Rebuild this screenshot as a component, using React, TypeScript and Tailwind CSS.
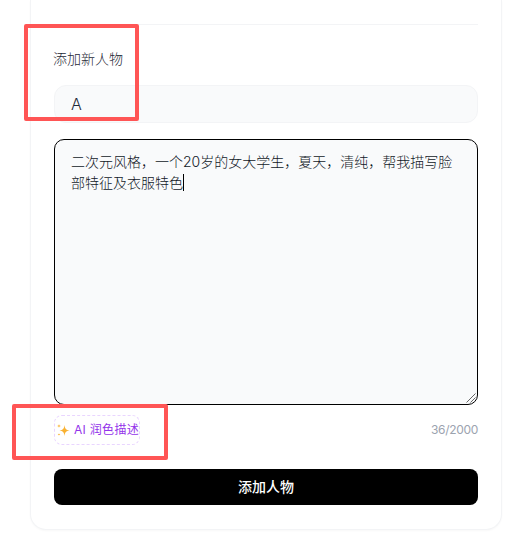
const FONT = "font-['Inter','Noto_Sans_CJK_SC',sans-serif]";

function Sparkle() {
  return (
    <svg width="14" height="14" viewBox="0 0 14 14" className="shrink-0">
      <path d="M8.5 2 C9 6 10 7 13.5 7.5 C10 8 9 9 8.5 13 C8 9 7 8 3.5 7.5 C7 7 8 6 8.5 2Z" fill="#f9b233" />
      <path d="M3 1 C3.2 2.4 3.6 2.8 5 3 C3.6 3.2 3.2 3.6 3 5 C2.8 3.6 2.4 3.2 1 3 C2.4 2.8 2.8 2.4 3 1Z" fill="#f9b233" />
      <path d="M3 10 C3.1 11 3.4 11.4 4.4 11.5 C3.4 11.6 3.1 12 3 13 C2.9 12 2.6 11.6 1.6 11.5 C2.6 11.4 2.9 11 3 10Z" fill="#f9b233" />
    </svg>
  );
}

function ResizeHandle() {
  return (
    <svg width="10" height="10" viewBox="0 0 10 10" className="pointer-events-none absolute bottom-[2px] right-[2px]">
      <path d="M9.5 0.5 L0.5 9.5 M9.5 4.5 L4.5 9.5" stroke="#666666" strokeWidth="1" fill="none" />
    </svg>
  );
}

export default function App() {
  return (
    <div className={`relative h-[540px] w-[525px] overflow-hidden bg-white ${FONT}`}>
      {/* Card, top is scrolled out of view */}
      <div className="mx-[30px] w-[472px] rounded-b-[16px] border-x border-b border-[#f3f4f6] bg-white px-[23px] pb-6 pt-6 shadow-[0_1px_2px_rgba(0,0,0,0.03)]">
        <div className="h-px bg-[#f3f4f6]" />

        <div className="-ml-px mt-[24px] text-[14px] leading-[20px] font-light text-[#1f2937]">添加新人物</div>

        <input
          readOnly
          value="A"
          className="mt-[16px] block h-[38px] w-full rounded-[12px] border border-[#f3f4f6] bg-[#f9fafb] px-4 text-[16px] font-light text-[#1f2937] outline-none"
        />

        <div className="relative mt-[16px]">
          <textarea
            readOnly
            defaultValue="二次元风格，一个20岁的女大学生，夏天，清纯，帮我描写脸部特征及衣服特色"
            className="block h-[266px] w-full resize-none rounded-[10px] border border-black bg-[#f9fafb] px-4 py-[11px] text-[14px] leading-[21px] font-light text-[#111827] outline-none"
          />
          {/* text caret */}
          <div className="absolute left-[129px] top-[35px] h-[17px] w-px bg-black" />
          <ResizeHandle />
        </div>

        <div className="mt-[10px] flex items-center justify-between">
          <button className="flex h-[30px] items-center gap-[4px] rounded-[8px] border border-dashed border-[#e9d5ff] pl-[1px] pr-0 text-[12px] tracking-[0.3px] text-[#9333ea]">
            <Sparkle />
            <span>AI 润色描述</span>
          </button>
          <span className="text-[12px] tracking-[-0.3px] text-[#9ca3af]">36/2000</span>
        </div>

        <button className="mt-[24px] flex h-[36px] w-full items-center justify-center rounded-[8px] bg-black pb-px text-[14px] font-medium text-white">
          添加人物
        </button>
      </div>

      {/* Red annotation boxes */}
      <div className="absolute left-[24px] top-[24px] h-[97px] w-[115px] rounded-[2px] border-4 border-[#ff5555]" />
      <div className="absolute left-[12px] top-[404px] h-[56px] w-[156px] rounded-[2px] border-4 border-[#ff5555]" />
    </div>
  );
}
